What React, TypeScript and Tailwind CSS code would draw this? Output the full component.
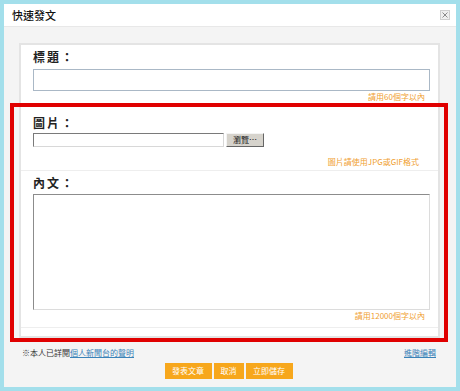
import React from "react";

const font = { fontFamily: '"Noto Sans CJK TC", "Noto Sans", sans-serif' };

export default function App() {
  return (
    <div
      className="relative w-[460px] h-[391px] bg-[#a3dfeb] p-[4px] pt-[4px]"
      style={font}
    >
      <div className="flex flex-col h-full bg-[#f4f4f4]">
        {/* header */}
        <div className="relative h-[23px] shrink-0 bg-white border-b border-[#e8e8e8] flex items-center pl-[8px]">
          <span className="text-[11px] leading-[14px] font-medium text-[#111]">快速發文</span>
          <div className="absolute right-[6px] top-[6px] w-[10px] h-[10px] border border-[#cfcfcf] bg-[#efefef] flex items-center justify-center">
            <svg width="6" height="6" viewBox="0 0 6 6">
              <path d="M0.5 0.5 L5.5 5.5 M5.5 0.5 L0.5 5.5" stroke="#8a8a8a" strokeWidth="1" />
            </svg>
          </div>
        </div>

        {/* body */}
        <div className="pl-[15px] pr-[16px] pt-[16px]">
          <div className="border-2 border-[#e4e4e4] bg-white pb-[8px]">
            {/* section 1 */}
            <div className="h-[59px] pl-[12px] pr-[8px] pt-[4px] flex flex-col">
              <div className="text-[12px] leading-[16px] font-semibold tracking-[2px] text-[#222]">標題：</div>
              <div className="mt-[4px] h-[22px] border border-[#aab8c6] bg-white" />
              <div className="text-right pr-[5px] text-[8px] leading-[12px] text-[#f0a030]">請用60個字以內</div>
            </div>
            <div className="h-px bg-[#eeeeee]" />
            {/* section 2 */}
            <div className="h-[65px] pl-[12px] pr-[8px] pt-[10px] flex flex-col">
              <div className="text-[12px] leading-[16px] font-semibold tracking-[2px] text-[#222]">圖片：</div>
              <div className="mt-[2px] flex items-center gap-[2px]">
                <div className="w-[191px] h-[14px] border border-[#7a7a7a] border-b-[#d8d8d8] border-r-[#d8d8d8] bg-white" />
                <div className="w-[38px] h-[14px] bg-[#d6d3cc] border border-[#f4f4f4] border-b-[#666] border-r-[#666] text-[8px] leading-[12px] text-[#111] flex items-center justify-center">
                  瀏覽…
                </div>
              </div>
              <div className="mt-[9px] text-right pr-[11px] text-[8px] leading-[12px] text-[#f0a030]">圖片請使用JPG或GIF格式</div>
            </div>
            <div className="h-px bg-[#eeeeee]" />
            {/* section 3 */}
            <div className="h-[156px] pl-[12px] pr-[8px] pt-[4px] flex flex-col">
              <div className="text-[12px] leading-[16px] font-semibold tracking-[2px] text-[#222]">內文：</div>
              <div className="mt-[3px] h-[116px] border border-[#8c8c8c] border-b-[#dcdcdc] border-r-[#dcdcdc] bg-white" />
              <div className="text-right pr-[5px] text-[8px] leading-[12px] text-[#f0a030]">請用12000個字以內</div>
            </div>
            <div className="h-px bg-[#eeeeee]" />
          </div>

          {/* bottom */}
          <div className="mt-[8px] flex items-center justify-between pl-[3px] pr-[4px] text-[8px] leading-[14px]">
            <span className="text-[#333]">
              ※本人已詳閱<span className="text-[#3a82b8] underline">個人新聞台的聲明</span>
            </span>
            <span className="text-[#3a82b8] underline">進階編輯</span>
          </div>
          <div className="mt-[3px] flex justify-center gap-[2px] pr-[2px]">
            <div className="h-[16px] w-[47px] bg-[#f7a71c] text-white text-[8px] leading-[16px] text-center">發表文章</div>
            <div className="h-[16px] w-[30px] bg-[#f7a71c] text-white text-[8px] leading-[16px] text-center">取消</div>
            <div className="h-[16px] w-[47px] bg-[#f7a71c] text-white text-[8px] leading-[16px] text-center">立即儲存</div>
          </div>
        </div>
      </div>

      {/* red annotation box */}
      <div className="absolute left-[10px] top-[103px] w-[438px] h-[239px] border-[4px] border-[#e00000] pointer-events-none" />
    </div>
  );
}
